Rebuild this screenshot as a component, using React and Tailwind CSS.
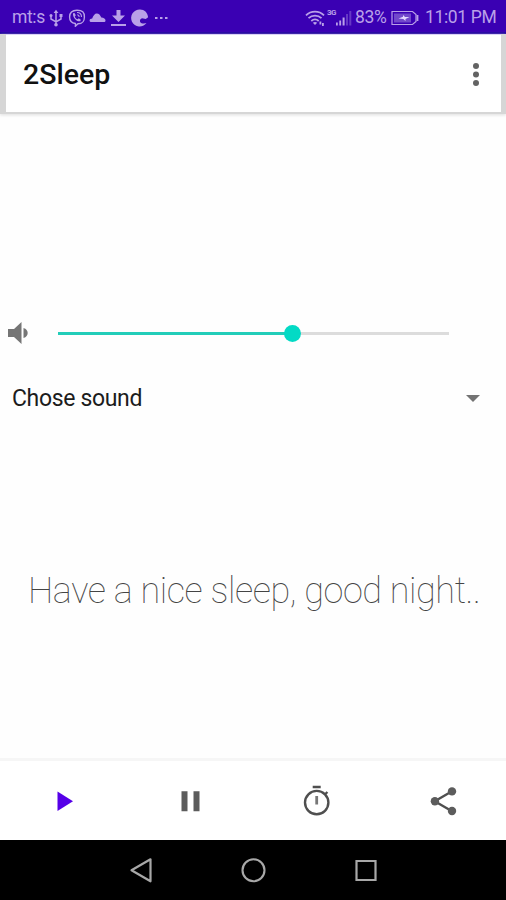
import React, { useState } from 'react';

const StatusBar = () => (
    <div className="flex h-[34px] shrink-0 items-center border-b-2 border-[#2000a0] bg-[#3a00b3] pt-[3px] text-[17.5px] tracking-[-0.35px] text-[#b9a0e8]">
        <span className="ml-[12px] w-[36px] whitespace-nowrap">mt:s</span>
        {/* USB */}
        <svg className="ml-[1px] h-[18px] w-[14px]" viewBox="0 0 14 18" fill="none" stroke="currentColor" strokeWidth="1.5">
            <path d="M7 2v14M2 7v3l5 3 5-3V7" />
            <path d="M4.6 4 7 .8 9.4 4z" fill="currentColor" stroke="none" />
            <circle cx="2" cy="6.5" r="1.5" fill="currentColor" stroke="none" />
            <path d="M10.5 5h3v3h-3z" fill="currentColor" stroke="none" />
            <circle cx="7" cy="15.7" r="1.8" fill="currentColor" stroke="none" />
        </svg>
        {/* Viber */}
        <svg className="ml-[5px] h-[18px] w-[18px]" viewBox="0 0 18 18" fill="none" stroke="currentColor" strokeWidth="1.4">
            <path d="M9 1.2c5.5 0 7.4 1.6 7.4 6.8s-1.9 6.6-6.4 6.7l-2.6 2.5v-2.7C3.2 14 1.6 12.4 1.6 8S3.5 1.2 9 1.2z" />
            <path d="M5 4.2 6.5 4l1.3 2.2-1 1.2c.5 1.4 1.4 2.3 2.8 2.900l1.2-1 2 1.5-.4 1.4C9 13.300 4.5 8.500 5 4.200z" fill="currentColor" stroke="none" />
            <path d="M9 3.5c3 0 4.5 1.7 4.5 4.5M9.2 5.7c1.4.1 2 .9 2 2.2" strokeWidth="1.1" />
        </svg>
        {/* Cloud */}
        <svg className="ml-[3px] h-[18px] w-[17px]" viewBox="0 0 17 18" fill="currentColor">
            <path d="M2.5 13C1 13 .5 12.1.6 11.2c.1-1 1.200-1.800 2.600-1.800C4.200 6.600 5.800 4.500 7.800 4.500c2 0 3.500 1.600 4.500 4.100 2.500.2 4.200 1.300 4.200 2.900 0 1-.6 1.500-1.700 1.500z" />
        </svg>
        {/* Download */}
        <svg className="ml-[4px] h-[18px] w-[17px]" viewBox="0 0 17 18" fill="currentColor">
            <path d="M6.5 1h4v5.500h4.500L8.500 13 2 6.500h4.500zM1 15h15v2H1z" />
        </svg>
        <svg className="ml-[4px] h-[18px] w-[18px]" viewBox="0 0 18 18" fill="currentColor">
            <path d="M9 .5a8.500 8.500 0 1 0 6.500 13.500c-2.500.9-5.500.4-6.300-1.100-.7-1.400.2-2.900 1.800-3.600l3.800.6 2.300-1.700C16.500 3.500 13.500.5 9 .5z" />
        </svg>
        <svg className="ml-[5px] h-[18px] w-[14px]" viewBox="0 0 14 18" fill="currentColor">
            <path d="M1 8h2.500v2H1zM6 8h2.500v2H6zM11 8h2.500v2H11z" />
        </svg>

        <div className="ml-auto flex items-center pr-[10px]">
            {/* Wi-Fi */}
            <svg className="h-[18px] w-[20px]" viewBox="0 0 20 18" fill="none" stroke="currentColor" strokeWidth="1.8">
                <path d="M1 6.300c5-5 13-5 18 0M3.500 9.200c3.700-3.500 9.300-3.500 13 0M6.300 12c2.300-2 5.100-2 7.400 0" />
                <path d="M7.800 13.700c1.500-1 2.900-1 4.400 0L10 16zM14.500 12.500h1.800v3h-1.800zM17 14h1.800v3H17z" fill="currentColor" stroke="none" />
            </svg>
            <div className="ml-[2px] flex h-[18px] w-[27px]">
                <span className="w-[9px] text-[8px] font-bold leading-[8px] tracking-[-0.6px]">3G</span>
                <svg className="h-[18px] w-[17px] shrink-0" viewBox="0 0 17 18" fill="currentColor">
                    <path d="M0 13.500h1.800v3H0zM3.300 11.500h1.800v5H3.300zM6.600 8.500h2v8h-2z" />
                    <path d="M10 5h2v11.500h-2zM13.300 2h2v14.500h-2z" opacity=".35" />
                </svg>
            </div>
            <span className="ml-[1px] w-[32px] whitespace-nowrap">83%</span>
            {/* Battery */}
            <svg className="ml-[4px] h-[18px] w-[28px]" viewBox="0 0 28 18" fill="none" stroke="currentColor" strokeWidth="1.2">
                <path d="M1 2.500h20.500l3.500 3v7l-3.500 3H1z" />
                <path d="M3 4.500h17v9H3z" fill="currentColor" stroke="none" opacity=".45" />
                <path d="M7.500 9.500 12 7.800V6l2 2h4.500L14.500 10v2l-2.200-2z" fill="#e4d8ff" stroke="none" />
                <path d="M26.500 6v6" strokeWidth="1.8" />
            </svg>
            <span className="ml-[6px] w-[71px] whitespace-nowrap">11:01 PM</span>
        </div>
    </div>
);

const AppBar = () => (
    <div className="shrink-0 bg-[#d6d6d6] pb-[2px] pl-[6px] pr-[5px] shadow-[0_1px_3px_#ddd]">
        <header className="flex h-[78px] items-center justify-between border-t border-[#d9d3f5] bg-white pl-[17px] pr-[19px] pt-[2px]">
            <h1 className="pt-[2px] text-[28.5px] font-medium text-[#111]">2Sleep</h1>
            <button type="button" title="More">
                <svg className="h-[24px] w-[12px]" viewBox="0 0 12 24" fill="#636363">
                    <circle cx="6" cy="3" r="3" />
                    <circle cx="6" cy="11.5" r="3" />
                    <circle cx="6" cy="20" r="3" />
                </svg>
            </button>
        </header>
    </div>
);

const VolumeSlider = ({ value }) => (
    <div className="flex h-[24px] items-center">
        <svg className="ml-[8px] h-[24px] w-[21px]" viewBox="0 0 21 24" fill="#757575">
            <path d="M0 8h6l7.500-7v22L6 16H0z" />
            <path d="M15.500 7c5.600 1.300 5.600 8.700 0 10z" />
        </svg>
        <div className="ml-[29px] flex w-[391px] items-center">
            <div className="h-[3px] bg-[#22cdb9]" style={{ width: `${value}%` }}></div>
            <div className="relative z-10 -mx-[8.5px] h-[17px] w-[17px] shrink-0 rounded-full bg-[#03dac5]"></div>
            <div className="h-[3px] flex-1 bg-[#dcdcdc]"></div>
        </div>
    </div>
);

const BottomBar = () => (
    <div className="grid h-[82px] shrink-0 grid-cols-4 border-t-[3px] border-[#f6f6f6] bg-white text-[#5c5c5c]">
        <button type="button" title="Play" className="flex items-center justify-center">
            <svg className="h-[32px] w-[32px]" viewBox="0 0 32 32" fill="#5600e8">
                <path d="M10.500 6.500v19.500L26 16.200z" />
            </svg>
        </button>
        <button type="button" title="Pause" className="flex items-center justify-center">
            <svg className="h-[32px] w-[32px]" viewBox="0 0 32 32" fill="currentColor">
                <path d="M7.500 6.200h6v20h-6zM19.500 6.200h6v20h-6z" />
            </svg>
        </button>
        <button type="button" title="Timer" className="flex items-center justify-center">
            <svg className="h-[32px] w-[32px]" viewBox="0 0 32 32" fill="none" stroke="#4f4f4f" strokeWidth="2.4">
                <circle cx="16.7" cy="17.6" r="11.7" />
                <path d="M12.700 2h8M24.900 9.500l2.500-2.500" />
                <path d="M16.700 11v8.500" stroke="#777" strokeWidth="2.8" />
            </svg>
        </button>
        <button type="button" title="Share" className="flex items-center justify-center">
            <svg className="h-[32px] w-[32px]" viewBox="0 0 32 32" fill="currentColor">
                <path d="M25 6.200 7.800 16.200 25 26.200" fill="none" stroke="#4f4f4f" strokeWidth="2.4" />
                <circle cx="25" cy="6.4" r="4.2" />
                <circle cx="7.9" cy="16.2" r="4.2" />
                <circle cx="25" cy="26" r="4.2" />
            </svg>
        </button>
    </div>
);

const NavBar = () => (
    <div className="flex h-[60px] shrink-0 items-center justify-center gap-[86px] bg-black text-[#a8a8a8]">
        <svg className="h-[26px] w-[26px]" viewBox="0 0 26 26" fill="none" stroke="currentColor" strokeWidth="2.2" strokeLinejoin="round">
            <path d="M22.500 2.300v22L3.500 13.300z" />
        </svg>
        <svg className="h-[26px] w-[26px]" viewBox="0 0 26 26" fill="none" stroke="currentColor" strokeWidth="2.1">
            <circle cx="13.5" cy="13.3" r="11" />
        </svg>
        <svg className="h-[26px] w-[26px]" viewBox="0 0 26 26" fill="none" stroke="currentColor" strokeWidth="2.2">
            <path d="M4.500 4h19v19h-19z" />
        </svg>
    </div>
);

export default function App() {
    const [volume] = useState(60);

    return (
        <div className="flex h-[900px] w-[506px] flex-col overflow-hidden bg-[#fefefe] font-[Roboto,sans-serif]">
            <StatusBar />
            <AppBar />
            <main className="flex flex-1 flex-col pt-[207px]">
                <VolumeSlider value={volume} />
                <div className="mt-[36px] flex items-center justify-between pl-[12px] pr-[26px]">
                    <span className="text-[23px] leading-[36px] tracking-[-0.35px] text-[#1c1c1c]">Chose sound</span>
                    <svg className="h-[8px] w-[14px]" viewBox="0 0 14 8" fill="#737373">
                        <path d="M0 0h14l-7 7z" />
                    </svg>
                </div>
                <p className="mt-[149px] whitespace-nowrap pl-[28px] text-[36px] font-thin leading-[50px] tracking-[-0.42px] text-[#444]">
                    Have a nice sleep, good night..
                </p>
            </main>
            <BottomBar />
            <NavBar />
        </div>
    );
}
